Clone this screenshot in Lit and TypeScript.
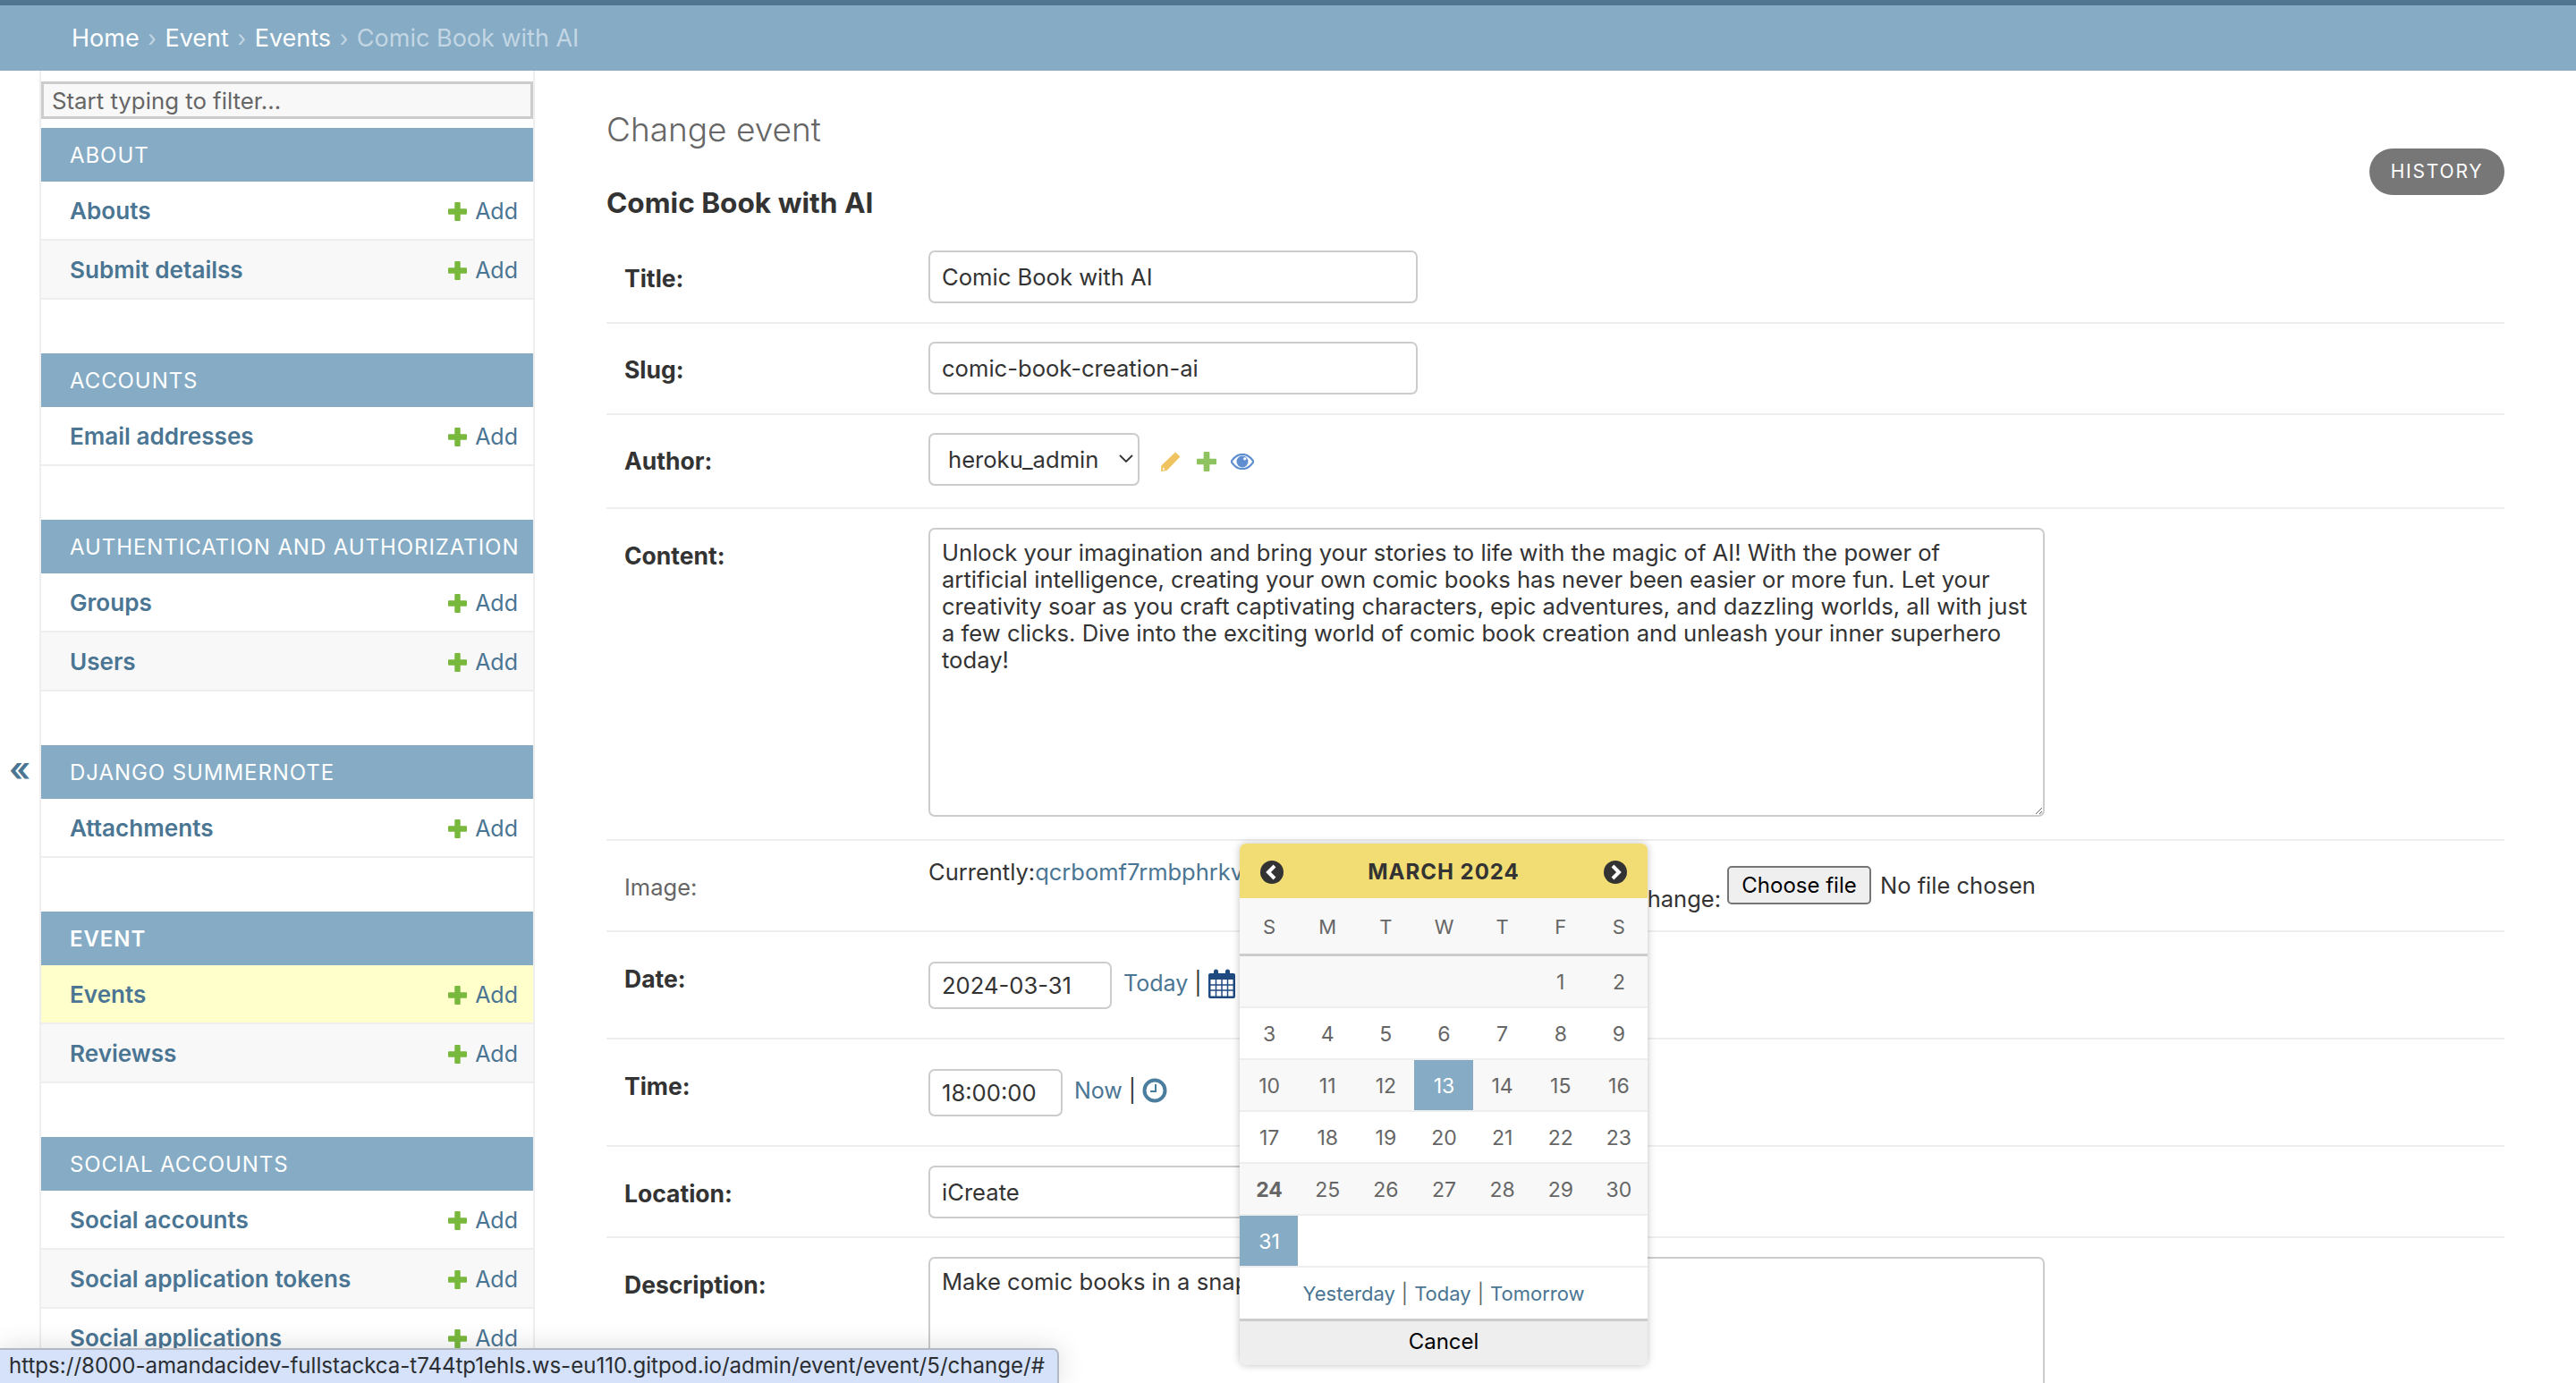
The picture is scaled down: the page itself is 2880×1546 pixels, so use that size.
import { LitElement, html, css } from "lit";
import { customElement } from "lit/decorators.js";

const plusPath =
  "M7.250 1.800a.8.8 0 0 1 .8-.8h3.900a.8.8 0 0 1 .8.8v5.450h5.450a.8.8 0 0 1 .8.8v3.900a.8.8 0 0 1-.8.8h-5.450v5.450a.8.8 0 0 1-.8.8H8.050a.8.8 0 0 1-.8-.8v-5.450H1.800a.8.8 0 0 1-.8-.8V8.050a.8.8 0 0 1 .8-.8h5.450z";

const plusIcon = (cls: string) => html`<svg class=${cls} viewBox="1 1 18 18">
  <path fill="currentColor" d=${plusPath}/>
</svg>`;

const modules = [
  { name: "About", rows: ["Abouts", "Submit detailss"] },
  { name: "Accounts", rows: ["Email addresses"] },
  { name: "Authentication and Authorization", rows: ["Groups", "Users"] },
  { name: "Django Summernote", rows: ["Attachments"] },
  { name: "Event", rows: ["Events", "Reviewss"], current: true },
  { name: "Social Accounts", rows: ["Social accounts", "Social application tokens", "Social applications"] },
];

const weeks = [
  ["", "", "", "", "", "1", "2"],
  ["3", "4", "5", "6", "7", "8", "9"],
  ["10", "11", "12", "13", "14", "15", "16"],
  ["17", "18", "19", "20", "21", "22", "23"],
  ["24", "25", "26", "27", "28", "29", "30"],
  ["31", "", "", "", "", "", ""],
];

const content =
  "Unlock your imagination and bring your stories to life with the magic of AI! With the power of artificial intelligence, creating your own comic books has never been easier or more fun. Let your creativity soar as you craft captivating characters, epic adventures, and dazzling worlds, all with just a few clicks. Dive into the exciting world of comic book creation and unleash your inner superhero today!";

@customElement("app-root")
export class AppRoot extends LitElement {
  static styles = css`
    :host {
      display: block;
      font-family: Inter, "Liberation Sans", sans-serif;
      color: #333;
      font-size: 25.5px;
      line-height: 30px;
    }
    * {
      box-sizing: border-box;
    }
    a {
      color: #4a7593;
      text-decoration: none;
    }
    .page {
      position: relative;
      height: 1546px;
      overflow: hidden;
      background: #fff;
    }
    .crumbs {
      height: 79px;
      border-top: 6px solid #4f7590;
      background: #85abc5;
      padding: 0 80px;
      display: flex;
      align-items: center;
      gap: 9.6px;
      font-size: 27px;
      color: #fff;
    }
    .crumbs .sep {
      color: #c3d6e3;
      font-size: 25px;
    }
    .crumbs .last {
      color: #c3d6e3;
    }
    .body {
      display: flex;
      align-items: flex-start;
    }
    .toggle {
      width: 46px;
      height: 1467px;
      flex: none;
      border-right: 2px solid #eee;
      display: flex;
      align-items: center;
      justify-content: center;
      color: #4a7593;
      font-size: 38px;
      font-weight: 600;
      padding-top: 92px;
    }
    .sidebar {
      width: 552px;
      flex: none;
      height: 1467px;
      border-right: 2px solid #eee;
      padding-top: 12px;
    }
    .filter {
      display: block;
      width: 550px;
      height: 42px;
      border: 3px solid #ccc;
      background: #f8f8f8;
      padding: 0 9px;
      margin-bottom: 10px;
      font: 25.8px Inter, sans-serif;
      color: #333;
      outline: none;
    }
    .filter::placeholder {
      color: #666;
    }
    .module {
      margin-bottom: 60px;
    }
    .module-head {
      height: 60px;
      background: #85abc5;
      color: #fff;
      display: flex;
      align-items: center;
      padding: 2px 0 0 32px;
      font-size: 24px;
      letter-spacing: 0.93px;
      text-transform: uppercase;
    }
    .module-head.current {
      font-weight: 600;
    }
    .module-row {
      height: 66px;
      padding: 2px 17px 0 32px;
      border-bottom: 2px solid #eee;
      display: flex;
      align-items: center;
      justify-content: space-between;
      background: #fff;
    }
    .module-row.alt {
      background: #f8f8f8;
    }
    .module-row.active {
      background: #ffc;
    }
    .module-row .name {
      font-size: 26.1px;
      font-weight: 600;
    }
    .add {
      display: flex;
      align-items: center;
      gap: 9px;
      font-size: 25px;
    }
    .add-plus {
      width: 21px;
      height: 21px;
      color: #78b83c;
    }
    .main {
      position: relative;
      flex: 1;
      padding: 0 80px;
    }
    .head {
      display: flex;
      justify-content: space-between;
      align-items: flex-start;
      height: 128px;
    }
    h1 {
      margin: 41px 0 0;
      font-size: 37px;
      line-height: 50px;
      font-weight: 300;
      color: #666;
    }
    .history {
      margin-top: 87px;
      height: 52px;
      width: 151px;
      border-radius: 26px;
      background: #777;
      color: #fff;
      font-size: 21px;
      letter-spacing: 1.8px;
      display: flex;
      align-items: center;
      justify-content: center;
    }
    h2 {
      margin: 0;
      font-size: 31.6px;
      line-height: 40px;
      font-weight: 700;
      color: #333;
      height: 53px;
    }
    .row {
      display: flex;
      padding: 20px 0 21px;
      border-bottom: 2px solid #eee;
    }
    .row.author {
      padding-bottom: 24px;
    }
    .row.body-text {
      padding: 21px 0 25px;
    }
    .row.date {
      padding: 33px 0 32px;
    }
    .row.loc {
      padding: 21px 0 20px;
    }
    .row.image {
      padding: 20px 0;
      height: 102px;
    }
    .row.desc {
      padding-top: 21px;
    }
    .label {
      width: 360px;
      flex: none;
      padding: 16px 0 0 20px;
      font-size: 26.5px;
      font-weight: 700;
    }
    .date .label {
      padding-top: 4px;
    }
    .image .label {
      padding-top: 17px;
      font-size: 25.5px;
      font-weight: 400;
      color: #666;
    }
    .field {
      height: 59px;
      border: 2px solid #ccc;
      border-radius: 7px;
      padding: 0 13px;
      font: 25.6px/30px Inter, sans-serif;
      color: #333;
      background: #fff;
      outline: none;
    }
    .wide {
      width: 547px;
    }
    .short {
      height: 53px;
    }
    .date-input {
      width: 205px;
    }
    .time-input {
      width: 150px;
    }
    .area {
      display: block;
      width: 1248px;
      height: 323px;
      padding: 11px 13px;
      resize: vertical;
    }
    .area.tall {
      height: 400px;
    }
    .select-wrap {
      position: relative;
      width: 236px;
    }
    .select {
      display: block;
      appearance: none;
      width: 100%;
      padding-left: 20px;
    }
    .chevron {
      position: absolute;
      right: 7px;
      top: 24px;
      width: 16px;
      height: 10px;
      pointer-events: none;
    }
    .related {
      display: flex;
      align-items: center;
      margin-left: 24px;
      padding-top: 5px;
      height: 59px;
    }
    .related svg {
      display: block;
    }
    .pencil {
      margin-right: 18px;
    }
    .green-plus {
      width: 22px;
      height: 22px;
      margin-right: 16px;
      color: #8fc35f;
    }
    .current-file {
      width: 893px;
      flex: none;
      display: flex;
      justify-content: space-between;
      white-space: nowrap;
    }
    .current-file .change {
      align-self: flex-end;
      padding-right: 7px;
    }
    .file-input {
      display: flex;
      align-items: center;
      gap: 10px;
      height: 43px;
      margin-top: 8px;
      white-space: nowrap;
    }
    .file-button {
      font: 24px Inter, sans-serif;
      height: 43px;
      width: 161px;
      padding: 0;
      border: 2px solid #767676;
      border-radius: 5px;
      background: #efefef;
      color: #000;
    }
    .shortcuts {
      display: flex;
      align-items: center;
      margin-left: 13px;
      height: 48px;
      gap: 7px;
      font-size: 25px;
    }
    .cal {
      position: absolute;
      left: 788px;
      top: 864px;
      width: 456px;
      height: 583px;
      box-shadow: 0 0 8px rgba(0, 0, 0, 0.25);
      background: #fff;
      border-radius: 7px;
      overflow: hidden;
    }
    .cal-head {
      height: 61px;
      background: #f2dd74;
      display: flex;
      align-items: center;
      justify-content: space-between;
      padding: 2px 23px 0;
      color: #333;
      font-weight: 700;
      font-size: 24px;
      letter-spacing: 1px;
      text-transform: uppercase;
    }
    .week {
      display: grid;
      grid-template-columns: repeat(7, 1fr);
      height: 58px;
      border-bottom: 2px solid #eee;
      background: #fff;
      color: #666;
      font-size: 23px;
    }
    .week.alt {
      background: #f8f8f8;
    }
    .week.names {
      height: 65px;
      background: #f8f8f8;
      border-bottom: 3px solid #ccc;
      font-size: 22px;
    }
    .week span {
      display: flex;
      align-items: center;
      justify-content: center;
      padding: 2px 0 0 1px;
    }
    .week .today {
      font-weight: 700;
    }
    .week .sel {
      background: #85abc5;
      color: #fff;
    }
    .quick {
      height: 57px;
      display: flex;
      align-items: center;
      justify-content: center;
      gap: 7px;
      font-size: 22px;
      color: #666;
    }
    .cancel {
      height: 52px;
      background: #eee;
      border-top: 3px solid #ccc;
      display: flex;
      align-items: center;
      justify-content: center;
      padding-bottom: 4px;
      font-size: 24px;
      color: #000;
    }
    .status {
      position: absolute;
      left: 0;
      bottom: 0;
      width: 1184px;
      height: 39px;
      background: #d5e2f9;
      border: 2px solid #b3b9c4;
      border-left: 0;
      border-bottom: 0;
      border-top-right-radius: 7px;
      box-shadow: 0 0 30px rgba(0, 0, 0, 0.14);
      padding-left: 10px;
      font-size: 24.05px;
      line-height: 36px;
      white-space: nowrap;
      color: #2a2e33;
    }
  `;

  private renderModule(m: (typeof modules)[number]) {
    return html`<div class="module">
      <div class="module-head ${m.current ? "current" : ""}">${m.name}</div>
      ${m.rows.map(
        (r, i) => html`<div class="module-row ${i % 2 ? "alt" : ""} ${r === "Events" ? "active" : ""}">
          <a class="name" href="#">${r}</a>
          <a class="add" href="#">${plusIcon("add-plus")}Add</a>
        </div>`
      )}
    </div>`;
  }

  private renderCalendar() {
    return html`<div class="cal">
      <div class="cal-head">
        <svg width="26" height="26" viewBox="0 0 26 26">
          <circle cx="13" cy="13" r="13" fill="#333"/>
          <path d="M16 6l-7 7 7 7" fill="none" stroke="#fff" stroke-width="4"/>
        </svg>
        <span>March 2024</span>
        <svg width="26" height="26" viewBox="0 0 26 26">
          <circle cx="13" cy="13" r="13" fill="#333"/>
          <path d="M10 6l7 7-7 7" fill="none" stroke="#fff" stroke-width="4"/>
        </svg>
      </div>
      <div class="week names">
        ${["S", "M", "T", "W", "T", "F", "S"].map((d) => html`<span>${d}</span>`)}
      </div>
      ${weeks.map(
        (w, i) => html`<div class="week ${i % 2 ? "" : "alt"}">
          ${w.map(
            (d) => html`<span class="${d === "13" || d === "31" ? "sel" : ""} ${d === "24" ? "today" : ""}">${d}</span>`
          )}
        </div>`
      )}
      <div class="quick">
        <a href="#">Yesterday</a>|<a href="#">Today</a>|<a href="#">Tomorrow</a>
      </div>
      <div class="cancel">Cancel</div>
    </div>`;
  }

  render() {
    return html`<div class="page">
      <div class="crumbs">
        <span>Home</span><span class="sep">›</span>
        <span>Event</span><span class="sep">›</span>
        <span>Events</span><span class="sep">›</span>
        <span class="last">Comic Book with AI</span>
      </div>
      <div class="body">
        <div class="toggle">«</div>
        <div class="sidebar">
          <input class="filter" placeholder="Start typing to filter..." />
          ${modules.map((m) => this.renderModule(m))}
        </div>
        <div class="main">
          <div class="head">
            <h1>Change event</h1>
            <a class="history" href="#">HISTORY</a>
          </div>
          <h2>Comic Book with AI</h2>
          <div class="row">
            <div class="label">Title:</div>
            <input class="field wide" value="Comic Book with AI" />
          </div>
          <div class="row">
            <div class="label">Slug:</div>
            <input class="field wide" value="comic-book-creation-ai" />
          </div>
          <div class="row author">
            <div class="label">Author:</div>
            <div class="select-wrap">
              <select class="field select"><option>heroku_admin</option></select>
              <svg class="chevron" viewBox="0 0 16 10">
                <path d="M1 1l7 7 7-7" fill="none" stroke="#333" stroke-width="1.8"/>
              </svg>
            </div>
            <div class="related">
              <svg class="pencil" width="22" height="22" viewBox="1 1 22 22">
                <path fill="#efc35f" d="M17 1.500l5.500 5-15 15.500-6.500 1 .3-6.500z"/>
                <path fill="#fff" d="M3 18.500l2.500 2.300-2.500.8z"/>
              </svg>
              ${plusIcon("green-plus")}
              <svg width="26" height="18" viewBox="1 2 24 16">
                <path fill="none" stroke="#5f8fd0" stroke-width="2" d="M1.500 10C5 4.500 9 2.500 13 2.500S21 4.500 24.500 10C21 15.500 17 17.500 13 17.500S5 15.500 1.500 10z"/>
                <circle cx="13" cy="10" r="6" fill="#5f8fd0"/>
                <circle cx="15.500" cy="7" r="1.500" fill="#fff"/>
              </svg>
            </div>
          </div>
          <div class="row body-text">
            <div class="label">Content:</div>
            <textarea class="field area" .value=${content}></textarea>
          </div>
          <div class="row image">
            <div class="label">Image:</div>
            <div class="current-file">
              <span>Currently:<a href="#">qcrbomf7rmbphrkvxdtqnhzl</a></span>
              <span class="change">Change:</span>
            </div>
            <div class="file-input">
              <button class="file-button">Choose file</button>
              <span>No file chosen</span>
            </div>
          </div>
          <div class="row date">
            <div class="label">Date:</div>
            <input class="field short date-input" value="2024-03-31" />
            <div class="shortcuts">
              <a href="#">Today</a><span>|</span>
              <svg width="30" height="33" viewBox="0 0 30 33">
                <path fill="#1f4a80" d="M2 5h4V3a2.500 2.500 0 0 1 5 0v2h8V3a2.500 2.500 0 0 1 5 0v2h4a2 2 0 0 1 2 2v24a2 2 0 0 1-2 2H2a2 2 0 0 1-2-2V7a2 2 0 0 1 2-2z"/>
                <path fill="#fff" d="M2.500 12h25v18.500h-25z"/>
                <path stroke="#1f4a80" stroke-width="1.5" d="M2 18h26M2 24h26M8.500 12v19M15 12v19M21.500 12v19"/>
              </svg>
            </div>
          </div>
          <div class="row date">
            <div class="label">Time:</div>
            <input class="field short time-input" value="18:00:00" />
            <div class="shortcuts">
              <a href="#">Now</a><span>|</span>
              <svg width="28" height="28" viewBox="0 0 28 28">
                <circle cx="14" cy="14" r="11.500" fill="none" stroke="#4a7d9e" stroke-width="4"/>
                <path d="M15 7v8H9" fill="none" stroke="#4a7d9e" stroke-width="2"/>
              </svg>
            </div>
          </div>
          <div class="row loc">
            <div class="label">Location:</div>
            <input class="field wide" value="iCreate" />
          </div>
          <div class="row desc">
            <div class="label">Description:</div>
            <textarea class="field area tall" .value=${"Make comic books in a snap with AI"}></textarea>
          </div>
          ${this.renderCalendar()}
        </div>
      </div>
      <div class="status">https://8000-amandacidev-fullstackca-t744tp1ehls.ws-eu110.gitpod.io/admin/event/event/5/change/#</div>
    </div>`;
  }
}
